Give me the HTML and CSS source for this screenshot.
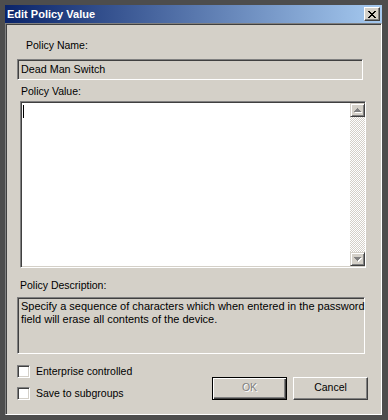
FILE: index.html
```html
<!DOCTYPE html>
<html lang="en">
  <head>
    <meta charset="UTF-8" />
    <title>Edit Policy Value</title>
    <link rel="stylesheet" href="styles.css">
  </head>
  <body>
    <div class="window">
      <div class="titlebar">
        <span class="title">Edit Policy Value</span>
        <button class="close" type="button">
          <svg width="8" height="7" viewBox="0 0 8 7" shape-rendering="crispEdges">
            <path fill="#000" d="M0 0h2v1h-2zM6 0h2v1h-2zM1 1h2v1h-2zM5 1h2v1h-2zM2 2h4v1h-4zM3 3h2v1h-2zM2 4h4v1h-4zM1 5h2v1h-2zM5 5h2v1h-2zM0 6h2v1h-2zM6 6h2v1h-2z"/>
          </svg>
        </button>
      </div>

      <div class="panel">
        <div class="label label-name">Policy Name:</div>
        <div class="field sunken">Dead Man Switch</div>

        <div class="label label-value">Policy Value:</div>
        <div class="editor sunken">
          <div class="editor-text"><span class="caret"></span></div>
          <div class="scrollbar">
            <div class="sb-btn">
              <svg width="8" height="5" viewBox="0 0 8 5" shape-rendering="crispEdges">
                <path fill="#fff" d="M4 1h1v1h-1zM3 2h3v1h-3zM2 3h5v1h-5zM1 4h7v1h-7z"/>
                <path fill="#808080" d="M3 0h1v1h-1zM2 1h3v1h-3zM1 2h5v1h-5zM0 3h7v1h-7z"/>
              </svg>
            </div>
            <div class="sb-track"></div>
            <div class="sb-btn">
              <svg width="8" height="5" viewBox="0 0 8 5" shape-rendering="crispEdges">
                <path fill="#fff" d="M1 1h7v1h-7zM2 2h5v1h-5zM3 3h3v1h-3zM4 4h1v1h-1z"/>
                <path fill="#808080" d="M0 0h7v1h-7zM1 1h5v1h-5zM2 2h3v1h-3zM3 3h1v1h-1z"/>
              </svg>
            </div>
          </div>
        </div>

        <div class="label label-desc">Policy Description:</div>
        <div class="desc sunken">
          Specify a sequence of characters which when entered in the password<br>
          field will erase all contents of the device.
        </div>

        <div class="footer">
          <div class="checks">
            <label class="check"><span class="box sunken"></span>Enterprise controlled</label>
            <label class="check"><span class="box sunken"></span>Save to subgroups</label>
          </div>
          <div class="buttons">
            <button class="btn default" type="button" disabled>OK</button>
            <button class="btn" type="button">Cancel</button>
          </div>
        </div>
      </div>
    </div>
  </body>
</html>
```

FILE: styles.css
```css
* {
  box-sizing: border-box;
  margin: 0;
  padding: 0;
}

body {
  background-color: #4d4d4d;
  font-family: "Liberation Sans", Arial, sans-serif;
  font-size: 10.5px;
  line-height: 13px;
  color: #000;
}

.window {
  width: 388px;
  height: 420px;
  padding: 5px 6px 5px 5px;
  display: flex;
  flex-direction: column;
}

.titlebar {
  flex: none;
  height: 18px;
  display: flex;
  align-items: center;
  justify-content: space-between;
  padding: 0 2px;
  background: linear-gradient(to right, #0a246a, #a6caf0);
}

.title {
  color: #fff;
  font-weight: bold;
  font-size: 11px;
}

.close {
  width: 16px;
  height: 14px;
  display: flex;
  align-items: center;
  justify-content: center;
  background-color: #d4d0c8;
  border: 1px solid;
  border-color: #fff #404040 #404040 #fff;
  box-shadow: inset -1px -1px #808080;
}

.panel {
  flex: 1;
  display: flex;
  flex-direction: column;
  align-items: flex-start;
  background-color: #d4d0c8;
  border: 1px solid;
  border-color: #808080 #fff #fff #808080;
  box-shadow: inset 1px 1px #404040;
}

.sunken {
  border: 1px solid;
  border-color: #808080 #fff #fff #808080;
  box-shadow: inset 1px 1px #404040, inset -1px -1px #d4d0c8;
}

.label-name {
  margin: 15px 0 0 20px;
}

.field {
  margin: 7px 0 0 11px;
  width: 346px;
  height: 21px;
  padding: 3px 3px 0;
  font-size: 10.75px;
}

.label-value {
  margin: 5px 0 0 15px;
}

.editor {
  margin: 3px 0 0 14px;
  width: 346px;
  height: 167px;
  padding: 1px 0 1px 1px;
  background-color: #fff;
  display: flex;
}

.editor-text {
  flex: 1;
}

.caret {
  display: block;
  width: 1px;
  height: 13px;
  margin: 2px 0 0 1px;
  background-color: #000;
}

.scrollbar {
  width: 15px;
  display: flex;
  flex-direction: column;
}

.sb-btn {
  height: 14px;
  display: flex;
  align-items: center;
  justify-content: center;
  background-color: #d4d0c8;
  border: 1px solid;
  border-color: #d4d0c8 #404040 #404040 #d4d0c8;
  box-shadow: inset 1px 1px #fff, inset -1px -1px #808080;
}

.sb-track {
  flex: 1;
  background: repeating-conic-gradient(#fff 0 25%, #d4d0c8 0 50%) 0 0 / 2px 2px;
}

.label-desc {
  margin: 11px 0 0 14px;
}

.desc {
  margin: 5px 0 0 11px;
  width: 348px;
  height: 57px;
  padding: 2px 3px 0;
  font-size: 11px;
  white-space: nowrap;
}

.footer {
  align-self: stretch;
  margin: 11px 13px 0 11px;
  display: flex;
  justify-content: space-between;
  align-items: flex-end;
}

.checks {
  display: flex;
  flex-direction: column;
  gap: 9px;
}

.check {
  height: 13px;
  display: flex;
  align-items: center;
}

.box {
  width: 13px;
  height: 13px;
  margin-right: 6px;
  background-color: #fff;
}

.buttons {
  display: flex;
  gap: 6px;
}

.btn {
  width: 75px;
  height: 23px;
  padding: 3px 0 5px;
  font: inherit;
  line-height: 13px;
  text-align: center;
  color: #000;
  background-color: #d4d0c8;
  border: 1px solid;
  border-color: #fff #404040 #404040 #fff;
  box-shadow: inset -1px -1px #808080;
}

.btn.default {
  border-color: #000;
  box-shadow: inset 1px 1px #fff, inset -1px -1px #404040, inset -2px -2px #808080;
}

.btn:disabled {
  color: #808080;
  text-shadow: 1px 1px #fff;
}
```
